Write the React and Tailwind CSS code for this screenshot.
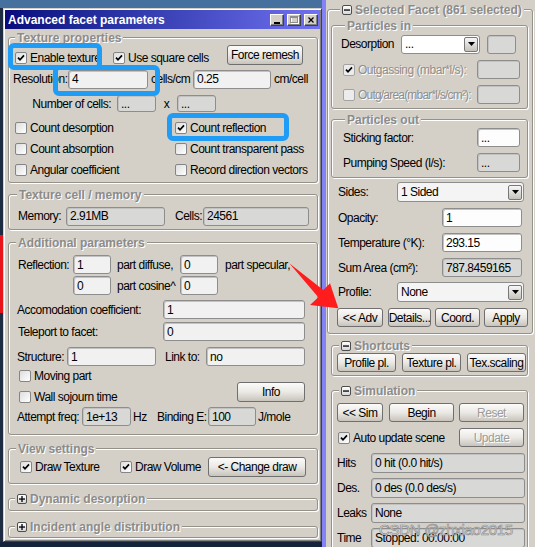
import React from 'react';

// ─── small classic-Windows widgets ───────────────────────────
const Tick = () => (
  <svg width="8" height="8" viewBox="0 0 8 8">
    <path d="M1 3.6 L3 5.8 L7 1.4" stroke="#000" strokeWidth="1.7" fill="none" />
  </svg>
);

const Chk = ({ on, off, label, className = '' }) => (
  <div className={`flex items-center ${className}`}>
    <span
      className={`flex h-[12px] w-[12px] shrink-0 items-center justify-center rounded-[2px] border ${
        off ? 'border-[#a3a3a3] bg-[#ececec]' : 'border-[#858585] bg-linear-to-br from-[#dedede] to-white'
      }`}
    >
      {on && <Tick />}
    </span>
    <span className={`ml-[3px] ${off ? 'text-[#8e8e8e] [text-shadow:1px_1px_0_#fff]' : ''}`}>{label}</span>
  </div>
);

const Field = ({ v, dis, white, h = 'h-[19px]', className = '' }) => (
  <div
    className={`flex ${h} shrink-0 items-center overflow-hidden rounded-[3px] border border-[#8d8d8d] pl-[3px] shadow-[inset_1px_1px_0_#c2c2c2] ${
      dis ? 'bg-[#d8d8d6]' : white ? 'bg-[#fdfdfd]' : 'bg-[#f1f1f1]'
    } ${className}`}
  >
    {v}
  </div>
);

const Btn = ({ children, dis, h = 'h-[19px]', className = '' }) => (
  <button
    type="button"
    className={`flex ${h} shrink-0 items-center justify-center rounded-[3px] border border-[#6f6f6f] bg-linear-to-b from-[#fbfbfa] via-[#ebe9e5] to-[#c8c4bc] ${
      dis ? 'text-[#9b9b9b] [text-shadow:1px_1px_0_#fff]' : ''
    } ${className}`}
  >
    {children}
  </button>
);

const Select = ({ v, h = 'h-[20px]', className = '' }) => (
  <div className={`flex ${h} shrink-0 items-center rounded-[3px] border border-[#8d8d8d] bg-[#f4f4f4] pl-[3px] pr-[1px] ${className}`}>
    <span className="flex-1">{v}</span>
    <span className="flex h-[15px] w-[14px] items-center justify-center rounded-[2px] border border-[#777] bg-linear-to-b from-[#f7f7f7] to-[#c6c2ba]">
      <svg width="7" height="4" viewBox="0 0 7 4">
        <path d="M0 0h7L3.5 4z" fill="#000" />
      </svg>
    </span>
  </div>
);

const Toggle = ({ sign }) => (
  <span className="mr-[3px] flex h-[10px] w-[10px] items-center justify-center rounded-[2px] border border-[#4d4d4d] bg-linear-to-b from-white to-[#d8d8d8]">
    <svg width="6" height="6" viewBox="0 0 6 6">
      <rect x="0" y="2.4" width="6" height="1.3" fill="#000" />
      {sign === '+' && <rect x="2.35" y="0" width="1.3" height="6" fill="#000" />}
    </svg>
  </span>
);

const Group = ({ title, sign, lx = 'ml-[6px]', className = '', children }) => (
  <div className={`shrink-0 rounded-[3px] border border-[#94918b] shadow-[inset_1px_1px_0_#fff,1px_1px_0_#fff] ${className}`}>
    <div
      className={`-mt-[7px] flex h-[14px] w-fit items-center bg-[#d4d0c8] px-[2px] font-bold tracking-normal text-[#8b8b8b] [text-shadow:1px_1px_0_#fff] ${lx}`}
    >
      {sign && <Toggle sign={sign} />}
      {title}
    </div>
    {children}
  </div>
);

const TB = ({ children }) => (
  <span className="flex h-[12px] w-[14px] items-center justify-center border border-t-white border-l-white border-r-[#404040] border-b-[#404040] bg-[#d4d0c8] shadow-[inset_-1px_-1px_0_#808080]">
    {children}
  </span>
);

// ─── left window ─────────────────────────────────────────────
const AdvancedWindow = () => (
  <div className="flex h-[534px] w-[319px] shrink-0 flex-col border border-t-[#d4d0c8] border-l-[#d4d0c8] border-r-[#404040] border-b-[#404040] bg-[#d4d0c8] p-[1px] shadow-[inset_1px_1px_0_#fff,inset_-1px_-1px_0_#808080]">
    <div className="flex h-[19px] shrink-0 items-center justify-between bg-linear-to-r from-[#0a0a7c] to-[#7171f1] pl-[3px] pr-[2px]">
      <span className="font-bold tracking-normal text-white">Advanced facet parameters</span>
      <div className="flex gap-[3px]">
        <TB>
          <svg width="6" height="8" viewBox="0 0 6 8"><rect x="0" y="6" width="6" height="2" fill="#000" /></svg>
        </TB>
        <TB>
          <svg width="9" height="8" viewBox="0 0 9 8">
            <rect x="1.5" y="1.5" width="7" height="6" fill="none" stroke="#fff" />
            <rect x="0.5" y="0.5" width="7" height="6" fill="none" stroke="#8d8d8d" />
            <rect x="0.5" y="0.5" width="7" height="1.5" fill="#8d8d8d" />
          </svg>
        </TB>
        <TB>
          <svg width="6" height="6" viewBox="0 0 6 6">
            <path d="M0.5 0.5 L5.5 5.5 M5.5 0.5 L0.5 5.5" stroke="#000" strokeWidth="1.3" />
          </svg>
        </TB>
      </div>
    </div>

    <div className="flex flex-1 flex-col pl-[3px] pr-[2px]">
      <Group title="Texture properties" className="mt-[8px] h-[146px]">
        <div className="flex h-[22px] items-start pl-[6px]">
          <Chk on label="Enable texture" className="mt-[7px] w-[98px]" />
          <Chk on label="Use square cells" className="mt-[7px] w-[114px]" />
          <Btn h="h-[20px]" className="w-[76px]">Force remesh</Btn>
        </div>
        <div className="mt-[2px] flex h-[20px] items-center pl-[4px]">
          <span className="w-[55px]">Resolution:</span>
          <Field v="4" className="w-[80px]" />
          <span className="ml-[3px] w-[42px]">cells/cm</span>
          <Field v="0.25" className="w-[78px]" />
          <span className="ml-[3px]">cm/cell</span>
        </div>
        <div className="mt-[5px] flex h-[19px] items-center">
          <span className="w-[108px] pr-[6px] text-right">Number of cells:</span>
          <Field v="..." dis h="h-[17px]" className="w-[39px]" />
          <span className="w-[21px] text-center">x</span>
          <Field v="..." dis h="h-[17px]" className="w-[39px]" />
        </div>
        <div className="mt-[4px] flex h-[21px] items-center pl-[6px]">
          <Chk label="Count desorption" className="w-[160px]" />
          <Chk on label="Count reflection" />
        </div>
        <div className="flex h-[21px] items-center pl-[6px]">
          <Chk label="Count absorption" className="w-[160px]" />
          <Chk label="Count transparent pass" />
        </div>
        <div className="flex h-[21px] items-center pl-[6px]">
          <Chk label="Angular coefficient" className="w-[160px]" />
          <Chk label="Record direction vectors" />
        </div>
      </Group>

      <Group title="Texture cell / memory" lx="ml-[8px]" className="mt-[11px] h-[36px]">
        <div className="mt-[4px] flex h-[20px] items-center pl-[9px]">
          <span className="w-[48px]">Memory:</span>
          <Field v="2.91MB" dis className="w-[99px]" />
          <span className="ml-[10px] w-[28px]">Cells:</span>
          <Field v="24561" dis className="w-[106px]" />
        </div>
      </Group>

      <Group title="Additional parameters" lx="ml-[7px]" className="mt-[12px] h-[193px]">
        <div className="mt-[5px] flex h-[19px] items-center pl-[9px]">
          <span className="w-[55px]">Reflection:</span>
          <Field v="1" className="w-[38px]" />
          <span className="ml-[6px] w-[63px]">part diffuse,</span>
          <Field v="0" className="w-[38px]" />
          <span className="ml-[7px]">part specular,</span>
        </div>
        <div className="mt-[2px] flex h-[19px] items-center pl-[64px]">
          <Field v="0" className="w-[38px]" />
          <span className="ml-[6px] w-[63px]">part cosine^</span>
          <Field v="0" className="w-[38px]" />
        </div>
        <div className="mt-[5px] flex h-[19px] items-center pl-[8px]">
          <span className="w-[146px]">Accomodation coefficient:</span>
          <Field v="1" className="w-[142px]" />
        </div>
        <div className="mt-[3px] flex h-[19px] items-center pl-[9px]">
          <span className="w-[145px]">Teleport to facet:</span>
          <Field v="0" className="w-[142px]" />
        </div>
        <div className="mt-[6px] flex h-[19px] items-center pl-[8px]">
          <span className="w-[50px]">Structure:</span>
          <Field v="1" className="w-[89px]" />
          <span className="ml-[9px] w-[41px]">Link to:</span>
          <Field v="no" className="w-[99px]" />
        </div>
        <div className="flex h-[41px]">
          <div className="flex flex-col pl-[10px]">
            <Chk label="Moving part" className="h-[20px]" />
            <Chk label="Wall sojourn time" className="h-[21px]" />
          </div>
          <Btn h="h-[20px]" className="ml-auto mr-[12px] mt-[16px] w-[68px]">Info</Btn>
        </div>
        <div className="flex h-[19px] items-center pl-[8px]">
          <span className="w-[65px]">Attempt freq:</span>
          <Field v="1e+13" dis className="w-[49px]" />
          <span className="ml-[2px] w-[24px]">Hz</span>
          <span className="w-[51px]">Binding E:</span>
          <Field v="100" dis className="w-[48px]" />
          <span className="ml-[2px]">J/mole</span>
        </div>
      </Group>

      <Group title="View settings" lx="ml-[7px]" className="mt-[13px] h-[36px]">
        <div className="flex h-[21px] items-center pl-[11px]">
          <Chk on label="Draw Texture" className="w-[100px]" />
          <Chk on label="Draw Volume" className="w-[88px]" />
          <Btn h="h-[20px]" className="w-[98px]">&lt;- Change draw</Btn>
        </div>
      </Group>

      <Group title="Dynamic desorption" sign="+" className="mt-[14px] h-[13px]" />
      <Group title="Incident angle distribution" sign="+" className="mt-[15px] h-[12px]" />
    </div>
  </div>
);

// ─── right panel ─────────────────────────────────────────────
const Row = ({ label, v, dis, white }) => (
  <div className="mt-[6px] flex h-[19px] items-center pl-[10px]">
    <span className="w-[104px]">{label}</span>
    <Field v={v} dis={dis} white={white} className="w-[80px]" />
  </div>
);

const Stat = ({ label, v, first }) => (
  <div className={`${first ? 'mt-[6px]' : 'mt-[5px]'} flex h-[20px] items-center pl-[5px]`}>
    <span className="w-[34px]">{label}</span>
    <Field v={v} dis h="h-[20px]" className="w-[154px]" />
  </div>
);

const RightPanel = () => (
  <div className="flex w-[209px] shrink-0 flex-col">
    <Group title="Selected Facet (861 selected)" sign="-" lx="ml-[12px]" className="ml-[1px] mt-[9px] h-[325px] w-[206px]">
      <Group title="Particles in" lx="ml-[13px]" className="ml-[3px] mt-[8px] h-[84px] w-[197px]">
        <div className="mt-[1px] flex h-[20px] items-center pl-[9px]">
          <span className="w-[60px]">Desorption</span>
          <Select v="..." h="h-[19px]" className="w-[79px] bg-white" />
          <Field v="" dis className="ml-[7px] w-[29px]" />
        </div>
        <div className="mt-[6px] flex h-[19px] items-center pl-[11px]">
          <Chk on off label="Outgassing (mbar*l/s):" className="w-[134px]" />
          <Field v="" dis className="w-[43px]" />
        </div>
        <div className="mt-[6px] flex h-[19px] items-center pl-[11px]">
          <Chk off label="Outg/area(mbar*l/s/cm²):" className="w-[134px] tracking-[-0.8px]" />
          <Field v="" dis className="w-[43px]" />
        </div>
      </Group>

      <Group title="Particles out" lx="ml-[13px]" className="ml-[3px] mt-[10px] h-[59px] w-[197px]">
        <div className="mt-[1px] flex h-[19px] items-center pl-[11px]">
          <span className="w-[134px]">Sticking factor:</span>
          <Field v="..." white className="w-[43px]" />
        </div>
        <div className="mt-[6px] flex h-[19px] items-center pl-[11px]">
          <span className="w-[134px]">Pumping Speed (l/s):</span>
          <Field v="..." dis className="w-[43px]" />
        </div>
      </Group>

      <div className="mt-[4px] flex h-[20px] items-center pl-[10px]">
        <span className="w-[59px]">Sides:</span>
        <Select v="1 Sided" className="w-[127px]" />
      </div>
      <Row label="Opacity:" v="1" white />
      <Row label="Temperature (°K):" v="293.15" white />
      <Row label="Sum Area (cm²):" v="787.8459165" dis />
      <div className="mt-[5px] flex h-[20px] items-center pl-[10px]">
        <span className="w-[59px]">Profile:</span>
        <Select v="None" className="w-[127px]" />
      </div>
      <div className="mt-[6px] flex h-[19px] items-center pl-[9px]">
        <Btn className="w-[46px]">&lt;&lt; Adv</Btn>
        <Btn className="ml-[5px] w-[43px]">Details...</Btn>
        <Btn className="ml-[4px] w-[45px]">Coord.</Btn>
        <Btn className="ml-[4px] w-[44px]">Apply</Btn>
      </div>
    </Group>

    <Group title="Shortcuts" sign="-" lx="ml-[7px]" className="ml-[5px] mt-[11px] h-[31px] w-[197px]">
      <div className="flex h-[19px] items-center pl-[5px]">
        <Btn className="w-[59px]">Profile pl.</Btn>
        <Btn className="ml-[6px] w-[59px]">Texture pl.</Btn>
        <Btn className="ml-[6px] w-[59px]">Tex.scaling</Btn>
      </div>
    </Group>

    <Group title="Simulation" sign="-" lx="ml-[7px]" className="ml-[5px] mt-[14px] h-[180px] w-[197px]">
      <div className="mt-[5px] flex h-[19px] items-center pl-[5px]">
        <Btn className="w-[46px]">&lt;&lt; Sim</Btn>
        <Btn className="ml-[6px] w-[65px]">Begin</Btn>
        <Btn dis className="ml-[5px] w-[65px]">Reset</Btn>
      </div>
      <div className="mt-[6px] flex h-[19px] items-center pl-[6px]">
        <Chk on label="Auto update scene" className="w-[121px]" />
        <Btn dis className="w-[65px]">Update</Btn>
      </div>
      <Stat first label="Hits" v="0 hit (0.0 hit/s)" />
      <Stat label="Des." v="0 des (0.0 des/s)" />
      <Stat label="Leaks" v="None" />
      <Stat label="Time" v="Stopped: 00:00:00" />
    </Group>
  </div>
);

// ─── page ────────────────────────────────────────────────────
export default function App() {
  return (
    <div className="relative flex h-[547px] w-[535px] overflow-hidden whitespace-nowrap bg-[#d4d0c8] font-['Liberation_Sans',Arial,sans-serif] text-[12px] leading-none tracking-[-0.5px] text-black">
      <div className="flex h-full w-[322px] shrink-0 flex-col bg-[#13233a]">
        <div className="h-[8px] shrink-0 bg-[#46709e]" />
        <div className="flex">
          <div className="flex w-[3px] shrink-0 flex-col bg-[#1d2c42]">
            <div className="h-[227px]" />
            <div className="h-[78px] bg-[#e8141a]" />
          </div>
          <AdvancedWindow />
        </div>
      </div>
      <div className="w-[4px] shrink-0 bg-[#8383f6]" />
      <RightPanel />

      {/* annotations drawn over the screenshot */}
      <div className="pointer-events-none absolute left-[8px] top-[43px] h-[27px] w-[94px] rounded-[6px] border-[5px] border-[#1f9cf5]" />
      <div className="pointer-events-none absolute left-[53px] top-[65px] h-[31px] w-[107px] rounded-[6px] border-[5px] border-[#1f9cf5]" />
      <div className="pointer-events-none absolute left-[167px] top-[113px] h-[28px] w-[122px] rounded-[6px] border-[5px] border-[#1f9cf5]" />
      <svg className="pointer-events-none absolute left-[285px] top-[258px]" width="60" height="56" viewBox="0 0 60 56">
        <polygon points="4.3,5.3 38.3,32 45,25.3 53.3,50.3 25,47 33.3,39.3" fill="#ff1c1c" />
      </svg>
      <div className="pointer-events-none absolute left-[379px] top-[522px] text-[15px] tracking-[-0.3px] text-white/80 [-webkit-text-stroke:0.7px_#8a8a8a]">
        CSDN @zhxiao2015
      </div>
    </div>
  );
}
